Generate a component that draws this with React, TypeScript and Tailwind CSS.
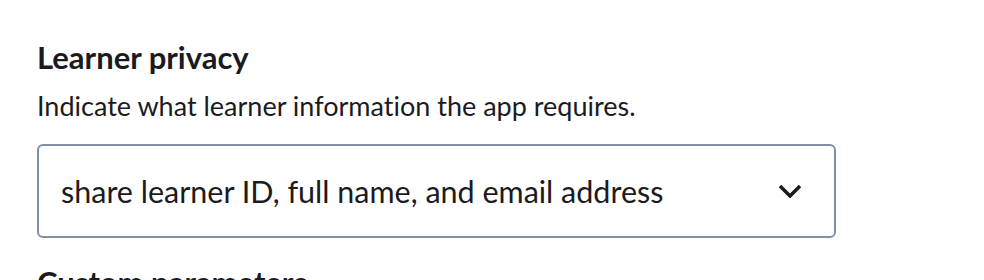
export default function App() {
  return (
    <div className="h-[280px] w-[984px] overflow-hidden bg-white pl-[37px] pt-[39px] text-[#1b1b1f] font-['Lato','Open_Sans',sans-serif] [font-variant-ligatures:none]">
      <h2 className="text-[31px] font-bold leading-[36px]">Learner privacy</h2>
      <p className="mt-[14px] text-[27px] leading-[34px]">
        Indicate what learner information the app requires.
      </p>

      {/* Privacy select */}
      <div className="mt-[21px] flex h-[94px] w-[799px] items-center justify-between rounded-[6px] border-2 border-[#8190a8] pl-[22px] pr-[32px]">
        <span className="text-[30.5px] leading-[38px]">share learner ID, full name, and email address</span>
        <svg width="24" height="14" viewBox="0 0 24 14" fill="none" stroke="currentColor" strokeWidth="3.5" strokeLinejoin="miter">
          <polyline points="2,2 12,12 22,2" />
        </svg>
      </div>

      <h2 className="mt-[26px] text-[31px] font-bold leading-[36px]">Custom parameters</h2>
    </div>
  );
}
